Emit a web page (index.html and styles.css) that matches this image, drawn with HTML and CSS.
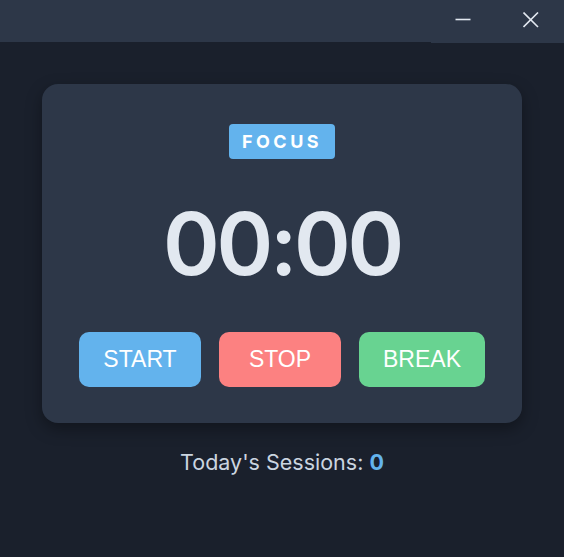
FILE: index.html
```html
<!DOCTYPE html>
<html>
<head>
<meta charset="utf-8">
<link rel="stylesheet" href="styles.css">
</head>
<body>
<div class="titlebar">
  <div class="drag"></div>
  <div class="controls">
    <button class="wbtn min" aria-label="Minimize">
      <svg width="16" height="16" viewBox="0 0 16 16"><path d="M0.5 5.5h15" stroke="#e2e8f0" stroke-width="1.6"/></svg>
    </button>
    <button class="wbtn close" aria-label="Close">
      <svg width="16" height="16" viewBox="0 0 16 16"><path d="M0.5 0.5L15 15M15 0.5L0.5 15" stroke="#e2e8f0" stroke-width="1.6"/></svg>
    </button>
  </div>
</div>
<main class="main">
  <section class="card">
    <div class="badge">FOCUS</div>
    <div class="timer">00:00</div>
    <div class="actions">
      <button class="btn start">START</button>
      <button class="btn stop">STOP</button>
      <button class="btn brk">BREAK</button>
    </div>
  </section>
  <p class="sessions">Today's Sessions: <span class="count">0</span></p>
</main>
</body>
</html>
```
FILE: styles.css
```css
* { box-sizing: border-box; }
html, body { margin: 0; padding: 0; }
body {
  background: #1a202c;
  font-family: Inter, "Noto Sans", sans-serif;
  width: 564px;
  height: 557px;
  overflow: hidden;
}
.titlebar {
  display: flex;
  align-items: flex-start;
  height: 42px;
}
.drag {
  flex: 1;
  height: 42px;
  background: #2d3748;
}
.controls {
  display: flex;
  height: 43px;
  background: #2d3748;
  position: relative;
  z-index: 1;
}
.wbtn {
  height: 43px;
  border: 0;
  background: transparent;
  padding: 0;
  display: flex;
  align-items: center;
  justify-content: center;
}
.min { width: 63px; }
.close { width: 70px; }
.close svg { transform: translate(2px, -2px); }
.main {
  display: flex;
  flex-direction: column;
  align-items: center;
  padding-top: 42px;
}
.card {
  width: 480px;
  height: 339px;
  background: #2d3748;
  border-radius: 16px;
  box-shadow: 0 6px 16px rgba(0,0,0,0.35);
  display: flex;
  flex-direction: column;
  align-items: center;
  padding-top: 40px;
}
.badge {
  background: #63b3ed;
  color: #ffffff;
  font-weight: 700;
  font-size: 18px;
  letter-spacing: 3.5px;
  height: 35px;
  line-height: 35px;
  padding: 0 13px 0 13px;
  border-radius: 4px;
}
.timer {
  margin-top: 33px;
  font-size: 86px;
  font-weight: 600;
  color: #e2e8f0;
  line-height: 104px;
  letter-spacing: -3.3px;
}
.actions {
  margin-top: 36px;
  display: flex;
  gap: 18px;
}
.btn {
  font-family: "Liberation Sans", Arial, sans-serif;
  font-size: 23px;
  color: #ffffff;
  border: 0;
  border-radius: 10px;
  height: 55px;
  padding: 0 24px;
  min-width: 122px;
}
.start { background: #63b3ed; }
.stop { background: #fc8181; }
.brk { background: #68d391; }
.sessions {
  margin: 26px 0 0;
  font-size: 21.5px;
  color: #cbd5e0;
}
.count {
  color: #63b3ed;
  font-weight: 700;
}
```
